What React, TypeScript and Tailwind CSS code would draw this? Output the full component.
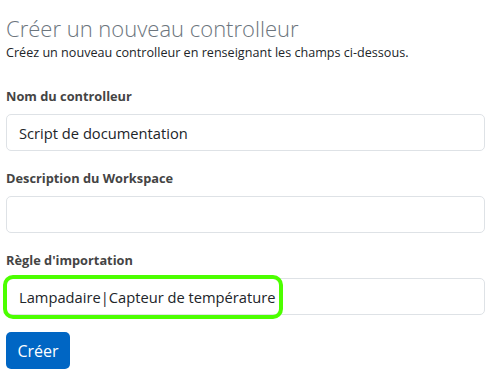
export default function App() {
  return (
    <div className="min-h-screen bg-white px-[6px] pt-[13px] font-['Open_Sans',sans-serif] text-[#212529]">
      <h1 className="text-[22px] font-light leading-[30px] text-[#6c757d]">
        Créer un nouveau controlleur
      </h1>
      <p className="mt-[1px] text-[12.6px] leading-[18px] text-[#212529]">
        Créez un nouveau controlleur en renseignant les champs ci-dessous.
      </p>

      <form className="mt-[26px] flex flex-col" onSubmit={(e) => e.preventDefault()}>
        <label className="text-[12.8px] font-bold leading-[17px] text-[#444]">Nom du controlleur</label>
        <input
          defaultValue="Script de documentation"
          className="mt-[9px] h-[37px] w-full rounded-[5px] border border-[#dee2e6] px-[12px] text-[14.7px] outline-none"
        />

        <label className="mt-[19px] text-[12.8px] font-bold leading-[17px] text-[#444]">
          Description du Workspace
        </label>
        <input className="mt-[9px] h-[37px] w-full rounded-[5px] border border-[#dee2e6] px-[12px] text-[14.7px] outline-none" />

        <label className="mt-[19px] text-[12.8px] font-bold leading-[17px] text-[#444]">
          Règle d'importation
        </label>
        <div className="relative mt-[9px]">
          <input
            defaultValue="Lampadaire|Capteur de température"
            className="h-[37px] w-full rounded-[5px] border border-[#dee2e6] px-[12px] text-[14.7px] outline-none"
          />
          <div className="pointer-events-none absolute left-[-3px] top-[-3px] h-[44px] w-[280px] rounded-[10px] border-[4px] border-[#4cff00]" />
        </div>

        <div className="mt-[17px]">
          <button className="h-[37px] w-[64px] rounded-[5px] bg-[#0066c4] text-[16px] text-white">Créer</button>
        </div>
      </form>
    </div>
  );
}
